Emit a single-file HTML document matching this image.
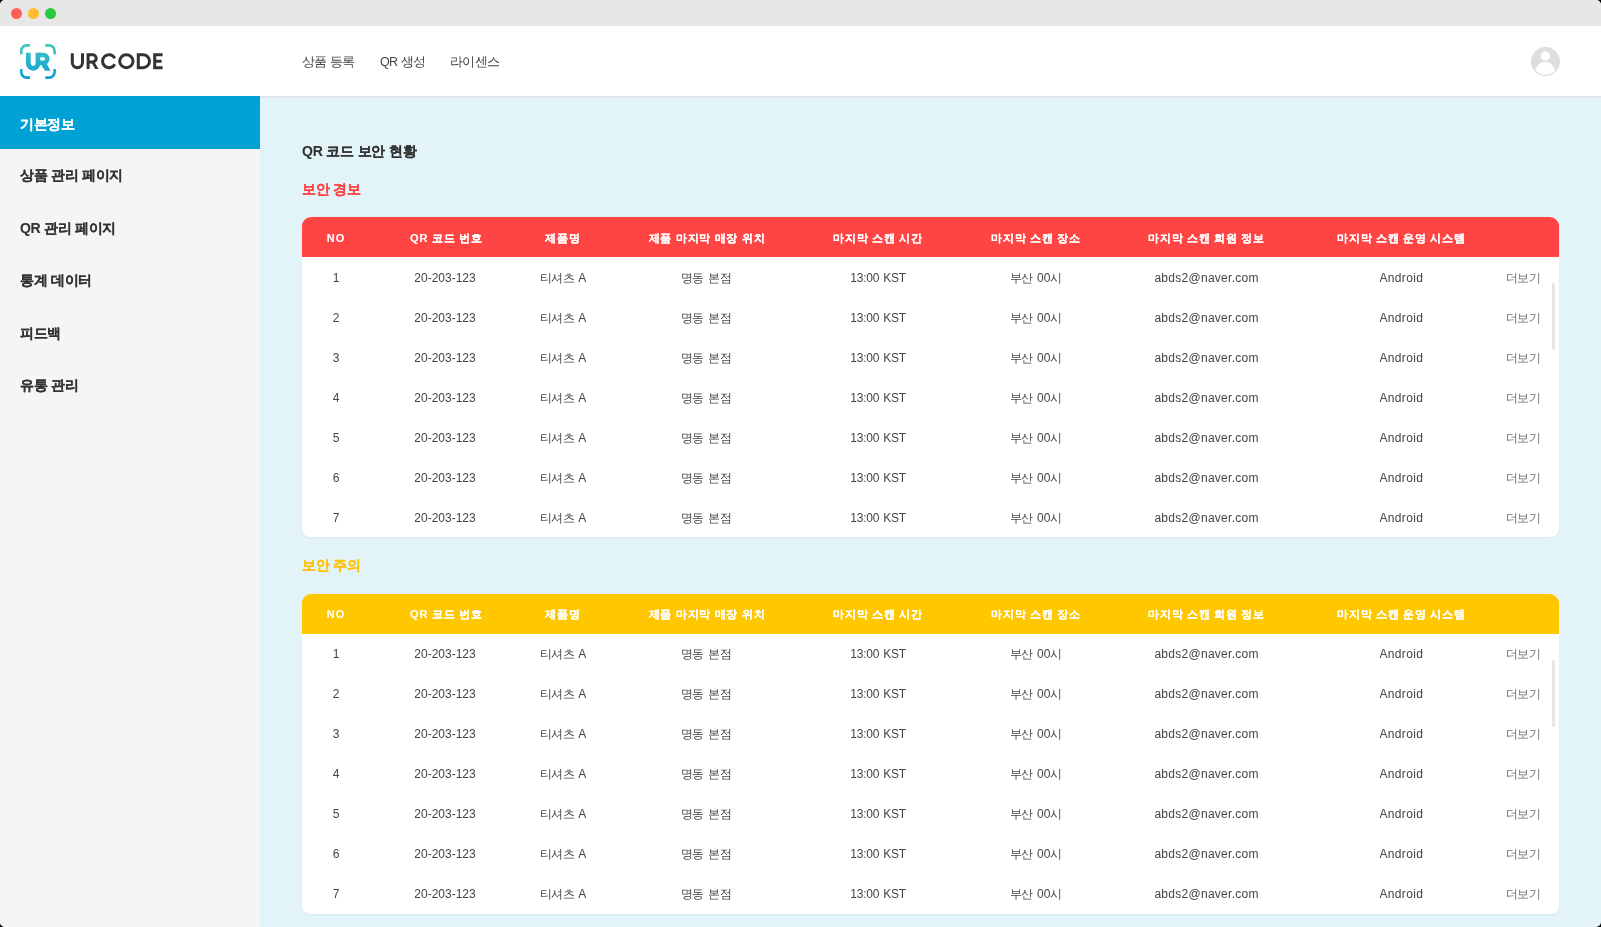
<!DOCTYPE html>
<html><head><meta charset="utf-8">
<style>
*{margin:0;padding:0;box-sizing:border-box}
html,body{width:1601px;height:927px;overflow:hidden;background:#000}
body{font-family:"Liberation Sans",sans-serif;position:relative}
#win{position:absolute;left:0;top:0;width:1601px;height:927px;border-radius:5px;overflow:hidden;background:#e3f4f9;will-change:transform}
#titlebar{position:absolute;left:0;top:0;width:1601px;height:26px;background:#e7e7e7;box-shadow:0 0.5px 1px rgba(0,0,0,0.05)}
.tl{position:absolute;top:8.4px;width:11px;height:11px;border-radius:50%}
#header{position:absolute;left:0;top:26px;width:1601px;height:70px;background:#fff}
#hline{position:absolute;left:260px;top:96px;width:1341px;height:1.5px;background:#dfe5e7}
#logo{position:absolute;left:14px;top:38px;width:50px;height:48px}
#brand{position:absolute;left:64px;top:44px;width:110px;height:36px}
.nav{position:absolute;top:51.5px;font-size:12.5px;letter-spacing:-0.75px;word-spacing:0.8px;color:#444;line-height:20px}
#avatar{position:absolute;left:1531px;top:47px;width:29px;height:29px}
#side{position:absolute;left:0;top:96px;width:260px;height:831px;background:#f5f5f5}
#active{position:absolute;left:0;top:0;width:260px;height:53px;background:#00a2d6}
.si{position:absolute;left:20px;font-size:14px;letter-spacing:-0.3px;-webkit-text-stroke:0.1px currentColor;font-weight:bold;color:#333;line-height:20px}
#title{position:absolute;left:302px;top:140.5px;font-size:14px;letter-spacing:-0.2px;-webkit-text-stroke:0.1px currentColor;font-weight:bold;color:#333;line-height:20px}
.lbl{position:absolute;left:302px;font-size:14px;letter-spacing:-0.3px;-webkit-text-stroke:0.1px currentColor;font-weight:bold;line-height:20px}
.tbl{position:absolute;left:302px;width:1257px;height:320px;background:#fff;border-radius:9px 9px 8px 8px;box-shadow:0 1px 2px rgba(0,40,60,0.06)}
.th{position:absolute;left:0;top:0;width:1257px;height:40px;border-radius:9px 9px 0 0}
.th .c{color:#fff;font-weight:bold;font-size:11px;letter-spacing:1px;word-spacing:-0.6px;top:11.5px;-webkit-text-stroke:0.12px #fff}
.th .k{font-size:11px;letter-spacing:0.8px}
.tr .k{font-size:12px;letter-spacing:-0.6px}
.red{background:#ff4444} .yel{background:#ffc700}
.tr{position:absolute;left:0;width:1257px;height:40px}
.c{position:absolute;width:200px;text-align:center;white-space:nowrap;line-height:18px}
.tr .c{top:11.5px;font-size:12px;color:#444;word-spacing:1px}
.tr .more{color:#6a6a6a}
.sb{position:absolute;left:1250px;top:66px;width:3px;height:67px;border-radius:2px;background:#e6e6e6}
</style></head><body><div id="win">
<div id="titlebar">
<div class="tl" style="left:11.1px;background:#ff5f57"></div>
<div class="tl" style="left:27.8px;background:#febc2e"></div>
<div class="tl" style="left:44.6px;background:#28c840"></div>
</div>
<div id="header">
</div>
<svg id="logo" viewBox="0 0 50 48">
<defs><linearGradient id="lg" x1="0" y1="6" x2="0" y2="41" gradientUnits="userSpaceOnUse"><stop offset="0" stop-color="#40c8c0"/><stop offset="1" stop-color="#0a9ed8"/></linearGradient></defs>
<g fill="none" stroke="url(#lg)" stroke-width="2.6">
<path d="M7.25 16.3V12.9A5.5 5.5 0 0 1 12.75 7.4H16"/>
<path d="M31.3 7.4H35.1A5.5 5.5 0 0 1 40.6 12.9V16.3"/>
<path d="M7.25 31V34.1A5.5 5.5 0 0 0 12.75 39.6H16"/>
<path d="M31.3 39.6H35.1A5.5 5.5 0 0 0 40.6 34.1V31"/>
<path d="M14.35 14.75V25.55A4.8 4.8 0 0 0 23.95 25.55V14.75" stroke-width="4.7"/>
<path d="M23.95 16.95H29.5A3.875 3.875 0 0 1 29.5 24.7H23.95" stroke-width="4.5"/>
</g>
<path d="M26.4 25.5H32.6L36.5 32.7H31.05Z" fill="url(#lg)"/>
</svg>
<svg id="brand" width="110" height="36" viewBox="0 0 110 36"><g fill="none" stroke="#333" stroke-width="3">
<path d="M8.3 9.3V18.6A5.1 5.1 0 0 0 18.5 18.6V9.3"/>
<path d="M24.1 25.1V10.7H28.6A3.6 3.6 0 0 1 28.6 17.9H24.1"/>
<path d="M50.8 14.2A6.5 6.5 0 1 0 50.8 20.2"/>
<ellipse cx="62.35" cy="17.2" rx="6.65" ry="6.5"/>
<path d="M74.3 10.7H79A6.5 6.5 0 0 1 79 23.7H74.3Z"/>
<path d="M98.6 10.7H90.7V23.7H98.6M90.7 17.2H97.6"/>
</g><path d="M27.4 18.2H30.6L34.5 25.1H31.2Z" fill="#333"/></svg>
<div class="nav" style="left:302px">상품 등록</div>
<div class="nav" style="left:380px">QR 생성</div>
<div class="nav" style="left:450px">라이센스</div>
<svg id="avatar" viewBox="0 0 29 29">
<defs><clipPath id="cc"><circle cx="14.5" cy="14.5" r="13.2"/></clipPath></defs>
<circle cx="14.5" cy="14.5" r="14.5" fill="#dedede"/>
<circle cx="14.3" cy="8.9" r="4.6" fill="#fff"/>
<path clip-path="url(#cc)" d="M3.9 26C4.5 19 9 14.7 14.05 14.7S23.6 19 24.2 26L24.2 30H3.9Z" fill="#fff"/>
</svg>
<div id="hline"></div>
<div id="side">
<div id="active"></div>
<div class="si" style="top:18.3px;color:#fff">기본정보</div>
<div class="si" style="top:69.2px">상품 관리 페이지</div>
<div class="si" style="top:122px">QR 관리 페이지</div>
<div class="si" style="top:174px">통계 데이터</div>
<div class="si" style="top:227px">피드백</div>
<div class="si" style="top:279.3px">유통 관리</div>
</div>
<div id="title">QR 코드 보안 현황</div>
<div class="lbl" style="top:178.8px;color:#ff4444">보안 경보</div>
<div class="tbl" style="top:217px"><div class="th red"><span class="c" style="left:-66px">NO</span><span class="c" style="left:44.30000000000001px">QR <span class="k">코드</span> <span class="k">번호</span></span><span class="c" style="left:161px"><span class="k">제품명</span></span><span class="c" style="left:305px"><span class="k">제품</span> <span class="k">마지막</span> <span class="k">매장</span> <span class="k">위치</span></span><span class="c" style="left:476.20000000000005px"><span class="k">마지막</span> <span class="k">스캔</span> <span class="k">시간</span></span><span class="c" style="left:634px"><span class="k">마지막</span> <span class="k">스캔</span> <span class="k">장소</span></span><span class="c" style="left:804.5999999999999px"><span class="k">마지막</span> <span class="k">스캔</span> <span class="k">회원</span> <span class="k">정보</span></span><span class="c" style="left:999.3px"><span class="k">마지막</span> <span class="k">스캔</span> <span class="k">운영</span> <span class="k">시스템</span></span></div><div class="tr" style="top:40px"><span class="c" style="left:-66px">1</span><span class="c" style="left:43px">20-203-123</span><span class="c" style="left:161px"><span class="k">티셔츠</span> A</span><span class="c" style="left:304px"><span class="k">명동</span> <span class="k">본점</span></span><span class="c" style="left:476.1px;letter-spacing:-0.25px">13:00 KST</span><span class="c" style="left:633.8px"><span class="k">부산</span> 00<span class="k">시</span></span><span class="c" style="left:804.5999999999999px;letter-spacing:0.28px">abds2@naver.com</span><span class="c" style="left:999.3px;letter-spacing:0.35px">Android</span><span class="c more" style="left:1121px"><span class="k">더보기</span></span></div><div class="tr" style="top:80px"><span class="c" style="left:-66px">2</span><span class="c" style="left:43px">20-203-123</span><span class="c" style="left:161px"><span class="k">티셔츠</span> A</span><span class="c" style="left:304px"><span class="k">명동</span> <span class="k">본점</span></span><span class="c" style="left:476.1px;letter-spacing:-0.25px">13:00 KST</span><span class="c" style="left:633.8px"><span class="k">부산</span> 00<span class="k">시</span></span><span class="c" style="left:804.5999999999999px;letter-spacing:0.28px">abds2@naver.com</span><span class="c" style="left:999.3px;letter-spacing:0.35px">Android</span><span class="c more" style="left:1121px"><span class="k">더보기</span></span></div><div class="tr" style="top:120px"><span class="c" style="left:-66px">3</span><span class="c" style="left:43px">20-203-123</span><span class="c" style="left:161px"><span class="k">티셔츠</span> A</span><span class="c" style="left:304px"><span class="k">명동</span> <span class="k">본점</span></span><span class="c" style="left:476.1px;letter-spacing:-0.25px">13:00 KST</span><span class="c" style="left:633.8px"><span class="k">부산</span> 00<span class="k">시</span></span><span class="c" style="left:804.5999999999999px;letter-spacing:0.28px">abds2@naver.com</span><span class="c" style="left:999.3px;letter-spacing:0.35px">Android</span><span class="c more" style="left:1121px"><span class="k">더보기</span></span></div><div class="tr" style="top:160px"><span class="c" style="left:-66px">4</span><span class="c" style="left:43px">20-203-123</span><span class="c" style="left:161px"><span class="k">티셔츠</span> A</span><span class="c" style="left:304px"><span class="k">명동</span> <span class="k">본점</span></span><span class="c" style="left:476.1px;letter-spacing:-0.25px">13:00 KST</span><span class="c" style="left:633.8px"><span class="k">부산</span> 00<span class="k">시</span></span><span class="c" style="left:804.5999999999999px;letter-spacing:0.28px">abds2@naver.com</span><span class="c" style="left:999.3px;letter-spacing:0.35px">Android</span><span class="c more" style="left:1121px"><span class="k">더보기</span></span></div><div class="tr" style="top:200px"><span class="c" style="left:-66px">5</span><span class="c" style="left:43px">20-203-123</span><span class="c" style="left:161px"><span class="k">티셔츠</span> A</span><span class="c" style="left:304px"><span class="k">명동</span> <span class="k">본점</span></span><span class="c" style="left:476.1px;letter-spacing:-0.25px">13:00 KST</span><span class="c" style="left:633.8px"><span class="k">부산</span> 00<span class="k">시</span></span><span class="c" style="left:804.5999999999999px;letter-spacing:0.28px">abds2@naver.com</span><span class="c" style="left:999.3px;letter-spacing:0.35px">Android</span><span class="c more" style="left:1121px"><span class="k">더보기</span></span></div><div class="tr" style="top:240px"><span class="c" style="left:-66px">6</span><span class="c" style="left:43px">20-203-123</span><span class="c" style="left:161px"><span class="k">티셔츠</span> A</span><span class="c" style="left:304px"><span class="k">명동</span> <span class="k">본점</span></span><span class="c" style="left:476.1px;letter-spacing:-0.25px">13:00 KST</span><span class="c" style="left:633.8px"><span class="k">부산</span> 00<span class="k">시</span></span><span class="c" style="left:804.5999999999999px;letter-spacing:0.28px">abds2@naver.com</span><span class="c" style="left:999.3px;letter-spacing:0.35px">Android</span><span class="c more" style="left:1121px"><span class="k">더보기</span></span></div><div class="tr" style="top:280px"><span class="c" style="left:-66px">7</span><span class="c" style="left:43px">20-203-123</span><span class="c" style="left:161px"><span class="k">티셔츠</span> A</span><span class="c" style="left:304px"><span class="k">명동</span> <span class="k">본점</span></span><span class="c" style="left:476.1px;letter-spacing:-0.25px">13:00 KST</span><span class="c" style="left:633.8px"><span class="k">부산</span> 00<span class="k">시</span></span><span class="c" style="left:804.5999999999999px;letter-spacing:0.28px">abds2@naver.com</span><span class="c" style="left:999.3px;letter-spacing:0.35px">Android</span><span class="c more" style="left:1121px"><span class="k">더보기</span></span></div><div class="sb"></div></div>
<div class="lbl" style="top:554.8px;color:#ffc107">보안 주의</div>
<div class="tbl" style="top:593.6px"><div class="th yel"><span class="c" style="left:-66px">NO</span><span class="c" style="left:44.30000000000001px">QR <span class="k">코드</span> <span class="k">번호</span></span><span class="c" style="left:161px"><span class="k">제품명</span></span><span class="c" style="left:305px"><span class="k">제품</span> <span class="k">마지막</span> <span class="k">매장</span> <span class="k">위치</span></span><span class="c" style="left:476.20000000000005px"><span class="k">마지막</span> <span class="k">스캔</span> <span class="k">시간</span></span><span class="c" style="left:634px"><span class="k">마지막</span> <span class="k">스캔</span> <span class="k">장소</span></span><span class="c" style="left:804.5999999999999px"><span class="k">마지막</span> <span class="k">스캔</span> <span class="k">회원</span> <span class="k">정보</span></span><span class="c" style="left:999.3px"><span class="k">마지막</span> <span class="k">스캔</span> <span class="k">운영</span> <span class="k">시스템</span></span></div><div class="tr" style="top:40px"><span class="c" style="left:-66px">1</span><span class="c" style="left:43px">20-203-123</span><span class="c" style="left:161px"><span class="k">티셔츠</span> A</span><span class="c" style="left:304px"><span class="k">명동</span> <span class="k">본점</span></span><span class="c" style="left:476.1px;letter-spacing:-0.25px">13:00 KST</span><span class="c" style="left:633.8px"><span class="k">부산</span> 00<span class="k">시</span></span><span class="c" style="left:804.5999999999999px;letter-spacing:0.28px">abds2@naver.com</span><span class="c" style="left:999.3px;letter-spacing:0.35px">Android</span><span class="c more" style="left:1121px"><span class="k">더보기</span></span></div><div class="tr" style="top:80px"><span class="c" style="left:-66px">2</span><span class="c" style="left:43px">20-203-123</span><span class="c" style="left:161px"><span class="k">티셔츠</span> A</span><span class="c" style="left:304px"><span class="k">명동</span> <span class="k">본점</span></span><span class="c" style="left:476.1px;letter-spacing:-0.25px">13:00 KST</span><span class="c" style="left:633.8px"><span class="k">부산</span> 00<span class="k">시</span></span><span class="c" style="left:804.5999999999999px;letter-spacing:0.28px">abds2@naver.com</span><span class="c" style="left:999.3px;letter-spacing:0.35px">Android</span><span class="c more" style="left:1121px"><span class="k">더보기</span></span></div><div class="tr" style="top:120px"><span class="c" style="left:-66px">3</span><span class="c" style="left:43px">20-203-123</span><span class="c" style="left:161px"><span class="k">티셔츠</span> A</span><span class="c" style="left:304px"><span class="k">명동</span> <span class="k">본점</span></span><span class="c" style="left:476.1px;letter-spacing:-0.25px">13:00 KST</span><span class="c" style="left:633.8px"><span class="k">부산</span> 00<span class="k">시</span></span><span class="c" style="left:804.5999999999999px;letter-spacing:0.28px">abds2@naver.com</span><span class="c" style="left:999.3px;letter-spacing:0.35px">Android</span><span class="c more" style="left:1121px"><span class="k">더보기</span></span></div><div class="tr" style="top:160px"><span class="c" style="left:-66px">4</span><span class="c" style="left:43px">20-203-123</span><span class="c" style="left:161px"><span class="k">티셔츠</span> A</span><span class="c" style="left:304px"><span class="k">명동</span> <span class="k">본점</span></span><span class="c" style="left:476.1px;letter-spacing:-0.25px">13:00 KST</span><span class="c" style="left:633.8px"><span class="k">부산</span> 00<span class="k">시</span></span><span class="c" style="left:804.5999999999999px;letter-spacing:0.28px">abds2@naver.com</span><span class="c" style="left:999.3px;letter-spacing:0.35px">Android</span><span class="c more" style="left:1121px"><span class="k">더보기</span></span></div><div class="tr" style="top:200px"><span class="c" style="left:-66px">5</span><span class="c" style="left:43px">20-203-123</span><span class="c" style="left:161px"><span class="k">티셔츠</span> A</span><span class="c" style="left:304px"><span class="k">명동</span> <span class="k">본점</span></span><span class="c" style="left:476.1px;letter-spacing:-0.25px">13:00 KST</span><span class="c" style="left:633.8px"><span class="k">부산</span> 00<span class="k">시</span></span><span class="c" style="left:804.5999999999999px;letter-spacing:0.28px">abds2@naver.com</span><span class="c" style="left:999.3px;letter-spacing:0.35px">Android</span><span class="c more" style="left:1121px"><span class="k">더보기</span></span></div><div class="tr" style="top:240px"><span class="c" style="left:-66px">6</span><span class="c" style="left:43px">20-203-123</span><span class="c" style="left:161px"><span class="k">티셔츠</span> A</span><span class="c" style="left:304px"><span class="k">명동</span> <span class="k">본점</span></span><span class="c" style="left:476.1px;letter-spacing:-0.25px">13:00 KST</span><span class="c" style="left:633.8px"><span class="k">부산</span> 00<span class="k">시</span></span><span class="c" style="left:804.5999999999999px;letter-spacing:0.28px">abds2@naver.com</span><span class="c" style="left:999.3px;letter-spacing:0.35px">Android</span><span class="c more" style="left:1121px"><span class="k">더보기</span></span></div><div class="tr" style="top:280px"><span class="c" style="left:-66px">7</span><span class="c" style="left:43px">20-203-123</span><span class="c" style="left:161px"><span class="k">티셔츠</span> A</span><span class="c" style="left:304px"><span class="k">명동</span> <span class="k">본점</span></span><span class="c" style="left:476.1px;letter-spacing:-0.25px">13:00 KST</span><span class="c" style="left:633.8px"><span class="k">부산</span> 00<span class="k">시</span></span><span class="c" style="left:804.5999999999999px;letter-spacing:0.28px">abds2@naver.com</span><span class="c" style="left:999.3px;letter-spacing:0.35px">Android</span><span class="c more" style="left:1121px"><span class="k">더보기</span></span></div><div class="sb"></div></div>
</div></body></html>
